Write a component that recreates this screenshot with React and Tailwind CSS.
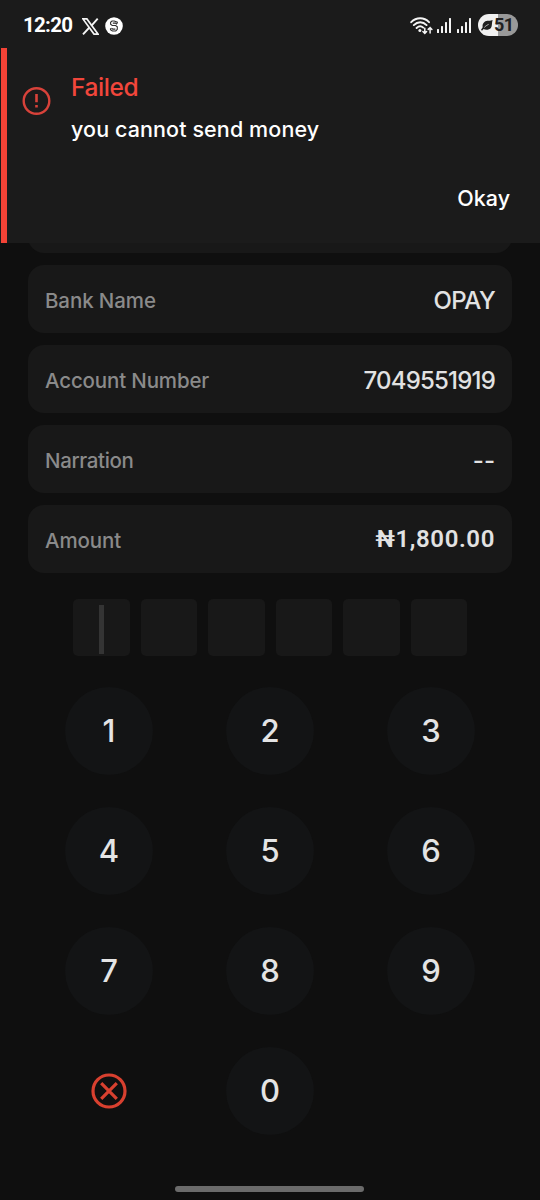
import React from "react";

const rows = [
  { label: "Bank Name", value: "OPAY", labelClass: "tracking-[-0.1px]", valueClass: "text-[24px] tracking-[-0.6px]" },
  { label: "Account Number", value: "7049551919", labelClass: "tracking-[-0.15px]", valueClass: "text-[24px] tracking-[-0.8px]" },
  { label: "Narration", value: "--", labelClass: "tracking-[-0.35px]", valueClass: "text-[24px] tracking-[0px]" },
];

const keys = ["1", "2", "3", "4", "5", "6", "7", "8", "9"];

function Signal() {
  return (
    <svg className="block h-[16px] w-[14px]" viewBox="0 0 14 16" fill="#f4f4f4">
      <rect x="0" y="12" width="2" height="4" rx=".5" />
      <rect x="4" y="9" width="2" height="7" rx=".5" />
      <rect x="8" y="5" width="2" height="11" rx=".5" />
      <rect x="12" y="1" width="2" height="15" rx=".5" />
    </svg>
  );
}

function StatusBar() {
  return (
    <div className="flex h-12 items-center pl-[23px] pr-[22px]">
      <span className="mt-[2px] font-[Roboto,sans-serif] text-[20.5px] font-bold leading-6 tracking-[-0.7px] text-white">12:20</span>
      <svg className="ml-[10px] mt-1 h-[17px] w-[17px]" viewBox="0 0 17 17" fill="none" stroke="#f4f4f4">
        <path d="M.9.9h4L16 16.1h-4L.9.9Z" strokeWidth="1.7" />
        <path d="M15.7.7 9.3 7.9M7.4 9.5 1 16.3" strokeWidth="1.9" />
      </svg>
      <svg className="ml-[6px] mt-[3px] h-[18px] w-[18px]" viewBox="0 0 18 18">
        <circle cx="9" cy="9" r="8.8" fill="#fff" />
        <path d="M12.3 6.4V5.2L9.2 4H7L5.6 5.3v2l1.6 1.2h3.4l1.7 1.3v2.6L10.8 14H7.4l-1.9-1.3v-1.4M12 7.2 10.4 6.1H7.8M6.4 11.3l1.4.8h2.6" fill="none" stroke="#303030" strokeWidth="1.1" />
      </svg>
      <div className="ml-auto flex items-center pt-[2px]">
        <svg className="h-[19px] w-[23px]" viewBox="0 0 23 19" fill="none" stroke="#f5f5f5" strokeLinecap="round">
          <path d="M1.2 6.2C6.3 1 14.1 1 19 6.2M3.8 9.1c3.8-3.8 9.1-3.8 12.8 0M6.6 12c2.2-2.1 4.8-2.1 6.6-.3" strokeWidth="1.9" />
          <circle cx="9.9" cy="14.6" r="1.5" fill="#f5f5f5" stroke="none" />
          <path d="M14.8 12.2v5.2m-1.9-1.9 1.9 1.9 1.8-1.9M20.1 17v-5.5m-1.9 1.9 1.9-1.9 1.8 1.9" strokeWidth="1.5" />
        </svg>
        <span className="ml-1"><Signal /></span>
        <span className="ml-[6px]"><Signal /></span>
        <div className="ml-[7px] flex h-[22px] w-[40px] items-center rounded-full bg-gradient-to-r from-[#f1f1f1] from-50% to-[#999] to-50% pl-[3px]">
          <svg className="h-[11px] w-[12px]" viewBox="0 0 12 11">
            <path d="M11.6 0C9.8 1.2 5.8 0 3.4 1.9 1.6 3.4 1.3 5.4 1.7 7.2L0 9.8l1 .9 1.6-1.6c2 .9 5.8.8 7.3-1.2 1.5-2 .7-4.9 1.7-7.9Z" fill="#202020" />
            <path d="M3.4 7.4C4.8 5.9 6.2 5 7.6 4.4" stroke="#eee" strokeWidth=".8" fill="none" />
          </svg>
          <span className="ml-px font-[Roboto,sans-serif] text-[18px] font-bold leading-5 tracking-[-0.7px] text-[#202020]">51</span>
        </div>
      </div>
    </div>
  );
}

function Toast() {
  return (
    <section className="flex h-[195px] pl-px">
      <div className="w-[6px] shrink-0 bg-[#f44336]" />
      <svg className="ml-[15px] mt-[38px] h-[30px] w-[30px] shrink-0" viewBox="0 0 30 30" fill="none" stroke="#d8423a">
        <circle cx="14.5" cy="15" r="12.8" strokeWidth="2.4" />
        <path d="M14.5 8v8.2M14.5 19v2.6" strokeWidth="2.6" />
      </svg>
      <div className="flex flex-1 flex-col pl-[19px] pr-[30px] pt-[24px]">
        <h1 className="text-[24.5px] font-medium leading-[30px] tracking-[-0.4px] text-[#f2463b]">Failed</h1>
        <p className="mt-[13px] text-[21.5px] font-medium leading-7 tracking-[0.1px] text-white">you cannot send money</p>
        <button className="mt-[41px] self-end text-[21.5px] font-medium leading-7 tracking-[0px] text-white">Okay</button>
      </div>
    </section>
  );
}

function Row({ label, labelClass, children }) {
  return (
    <div className="flex h-[68px] items-center justify-between rounded-[16px] bg-[#181818] px-[17px]">
      <span className={"mt-[3px] text-[20.5px] font-medium leading-7 text-[#8a8a8a] " + labelClass}>{label}</span>
      {children}
    </div>
  );
}

function Key({ children }) {
  return (
    <button className="flex h-[88px] w-[88px] items-center justify-center rounded-full bg-[#131415] pb-[2px] text-[31px] font-medium leading-none text-[#e4e4e4]">
      {children}
    </button>
  );
}

export default function App() {
  return (
    <main className="flex h-[1200px] w-[540px] flex-col overflow-hidden bg-[#0f0f0f] font-[Inter,sans-serif]">
      <header className="h-[243px] shrink-0 bg-[#1b1b1b]">
        <StatusBar />
        <Toast />
      </header>
      <div className="mx-7 h-[10px] shrink-0 overflow-hidden">
        <div className="-mt-[58px] h-[68px] rounded-[16px] bg-[#181818]" />
      </div>
      <div className="mx-7 mt-3 flex flex-col gap-3">
        {rows.map((r) => (
          <Row key={r.label} label={r.label} labelClass={r.labelClass}>
            <span className={"mt-[3px] font-[450] leading-7 text-[#e2e2e2] " + r.valueClass}>{r.value}</span>
          </Row>
        ))}
        <Row label="Amount" labelClass="tracking-[-0.1px]">
          <span className="-mt-[1px] font-[Roboto,sans-serif] text-[24px] font-semibold leading-7 tracking-[0.6px] text-[#e2e2e2]">₦1,800.00</span>
        </Row>
      </div>
      <div className="ml-[73px] mt-[26px] flex gap-[11px]">
        {[0, 1, 2, 3, 4, 5].map((i) => (
          <div key={i} className="flex h-[57px] w-[56.5px] items-center justify-center rounded-[5px] bg-[#181818]">
            {i === 0 && <div className="mt-[4px] h-[49px] w-[5px] bg-[#343434]" />}
          </div>
        ))}
      </div>
      <div className="ml-[65px] mt-[31px] grid grid-cols-[88px_88px_88px] gap-x-[73px] gap-y-[32px]">
        {keys.map((k) => (
          <Key key={k}>{k}</Key>
        ))}
        <button className="flex h-[88px] w-[88px] items-center justify-center" aria-label="Delete">
          <svg className="h-[36px] w-[36px]" viewBox="0 0 36 36" fill="none" stroke="#d8402f" strokeWidth="3.2">
            <circle cx="18" cy="18" r="16" />
            <path d="m10.2 10.2 15.6 15.6M25.8 10.2 10.2 25.8" />
          </svg>
        </button>
        <Key>0</Key>
      </div>
      <div className="ml-[175px] mt-[51px] h-[6px] w-[189px] shrink-0 rounded-full bg-[#6b6b6b]" />
    </main>
  );
}
